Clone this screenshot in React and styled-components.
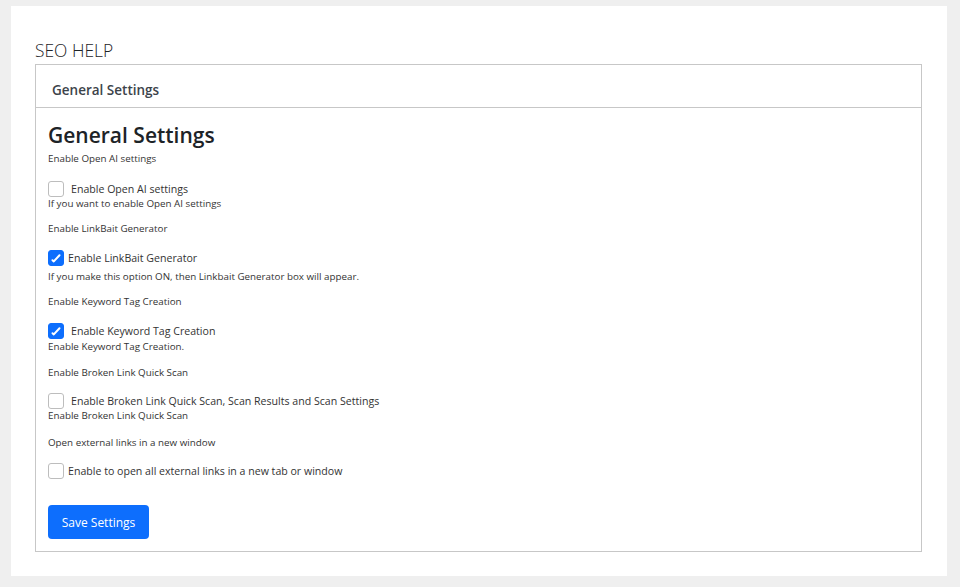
import React from "react";
import styled, { createGlobalStyle } from "styled-components";

const Global = createGlobalStyle`
  html, body { margin: 0; padding: 0; background: #efefef; }
  body { font-family: "Open Sans", "Noto Sans", sans-serif; color: #1d2327; }
  * { box-sizing: border-box; }
`;

const Page = styled.div`
  padding: 6px 13px 11px 11px;
  height: 587px;
`;

const Panel = styled.div`
  background: #fff;
  height: 570px;
  padding: 32px 25px 24px 24px;
  display: flex;
  flex-direction: column;
`;

const PageTitle = styled.h1`
  margin: 0 0 2px;
  font-size: 17.4px;
  font-weight: 300;
  line-height: 24px;
  color: #1d2327;
`;

const Card = styled.div`
  border: 1px solid #c7c7c7;
  flex: 1;
  display: flex;
  flex-direction: column;
`;

const CardHeader = styled.div`
  height: 43px;
  border-bottom: 1px solid #c7c7c7;
  padding: 15px 16px 0;
  font-size: 13.5px;
  font-weight: 600;
  line-height: 20px;
  color: #3c434a;
`;

const CardBody = styled.div`
  padding: 13px 12px 0;
`;

const Heading = styled.h2`
  margin: 0;
  font-size: 21px;
  font-weight: 600;
  line-height: 28px;
  color: #1d2327;
`;

const Section = styled.div`
  display: flex;
  flex-direction: column;
`;

const Caption = styled.div`
  font-size: 9.8px;
  line-height: 14px;
  color: #333;
  margin-top: ${(p) => p.$top || 0}px;
`;

const CheckRow = styled.label`
  display: flex;
  align-items: center;
  gap: ${(p) => p.$gap || 7}px;
  height: 16px;
  font-size: 10.6px;
  color: #333;
  margin-top: ${(p) => p.$top || 0}px;
`;

const Box = styled.span`
  width: 16px;
  height: 16px;
  border-radius: 3px;
  border: 1px solid ${(p) => (p.$on ? "#0d6efd" : "#bdbdbd")};
  background: ${(p) => (p.$on ? "#0d6efd" : "#fff")};
  display: inline-flex;
  align-items: center;
  justify-content: center;
  flex: none;
`;

const Help = styled.div`
  font-size: 9.8px;
  line-height: 14px;
  color: #333;
  margin-top: ${(p) => p.$top || 0}px;
`;

const Button = styled.button`
  margin-top: 26px;
  width: 101px;
  height: 34px;
  border: none;
  border-radius: 4px;
  background: #0d6efd;
  color: #fff;
  font-family: inherit;
  font-size: 12px;
  padding: 0;
  cursor: pointer;
`;

const Check = () => (
  <svg width="14" height="14" viewBox="0 0 14 14">
    <path d="M3.5 9.2 L4.8 10.4 L10.5 4.2" stroke="#fff" strokeWidth="2" fill="none" strokeLinecap="round" strokeLinejoin="round" />
  </svg>
);

const items = [
  { cap: "Enable Open AI settings", label: "Enable Open AI settings", help: "If you want to enable Open AI settings", on: false, gap: 7, capTop: 3, cbTop: 15, helpTop: 0 },
  { cap: "Enable LinkBait Generator", label: "Enable LinkBait Generator", help: "If you make this option ON, then Linkbait Generator box will appear.", on: true, gap: 4, capTop: 11, cbTop: 14, helpTop: 4 },
  { cap: "Enable Keyword Tag Creation", label: "Enable Keyword Tag Creation", help: "Enable Keyword Tag Creation.", on: true, gap: 7, capTop: 11, cbTop: 14, helpTop: 1 },
  { cap: "Enable Broken Link Quick Scan", label: "Enable Broken Link Quick Scan, Scan Results and Scan Settings", help: "Enable Broken Link Quick Scan", on: false, gap: 7, capTop: 12, cbTop: 13, helpTop: 0 },
  { cap: "Open external links in a new window", label: "Enable to open all external links in a new tab or window", help: null, on: false, gap: 4, capTop: 13, cbTop: 13, helpTop: 0 },
];

export default function App() {
  return (
    <>
      <Global />
      <Page>
        <Panel>
          <PageTitle>SEO HELP</PageTitle>
          <Card>
            <CardHeader>General Settings</CardHeader>
            <CardBody>
              <Heading>General Settings</Heading>
              {items.map((it, i) => (
                <Section key={i}>
                  <Caption $top={it.capTop}>{it.cap}</Caption>
                  <CheckRow $top={it.cbTop} $gap={it.gap}>
                    <Box $on={it.on}>{it.on && <Check />}</Box>
                    {it.label}
                  </CheckRow>
                  {it.help && <Help $top={it.helpTop}>{it.help}</Help>}
                </Section>
              ))}
              <Button>Save Settings</Button>
            </CardBody>
          </Card>
        </Panel>
      </Page>
    </>
  );
}
